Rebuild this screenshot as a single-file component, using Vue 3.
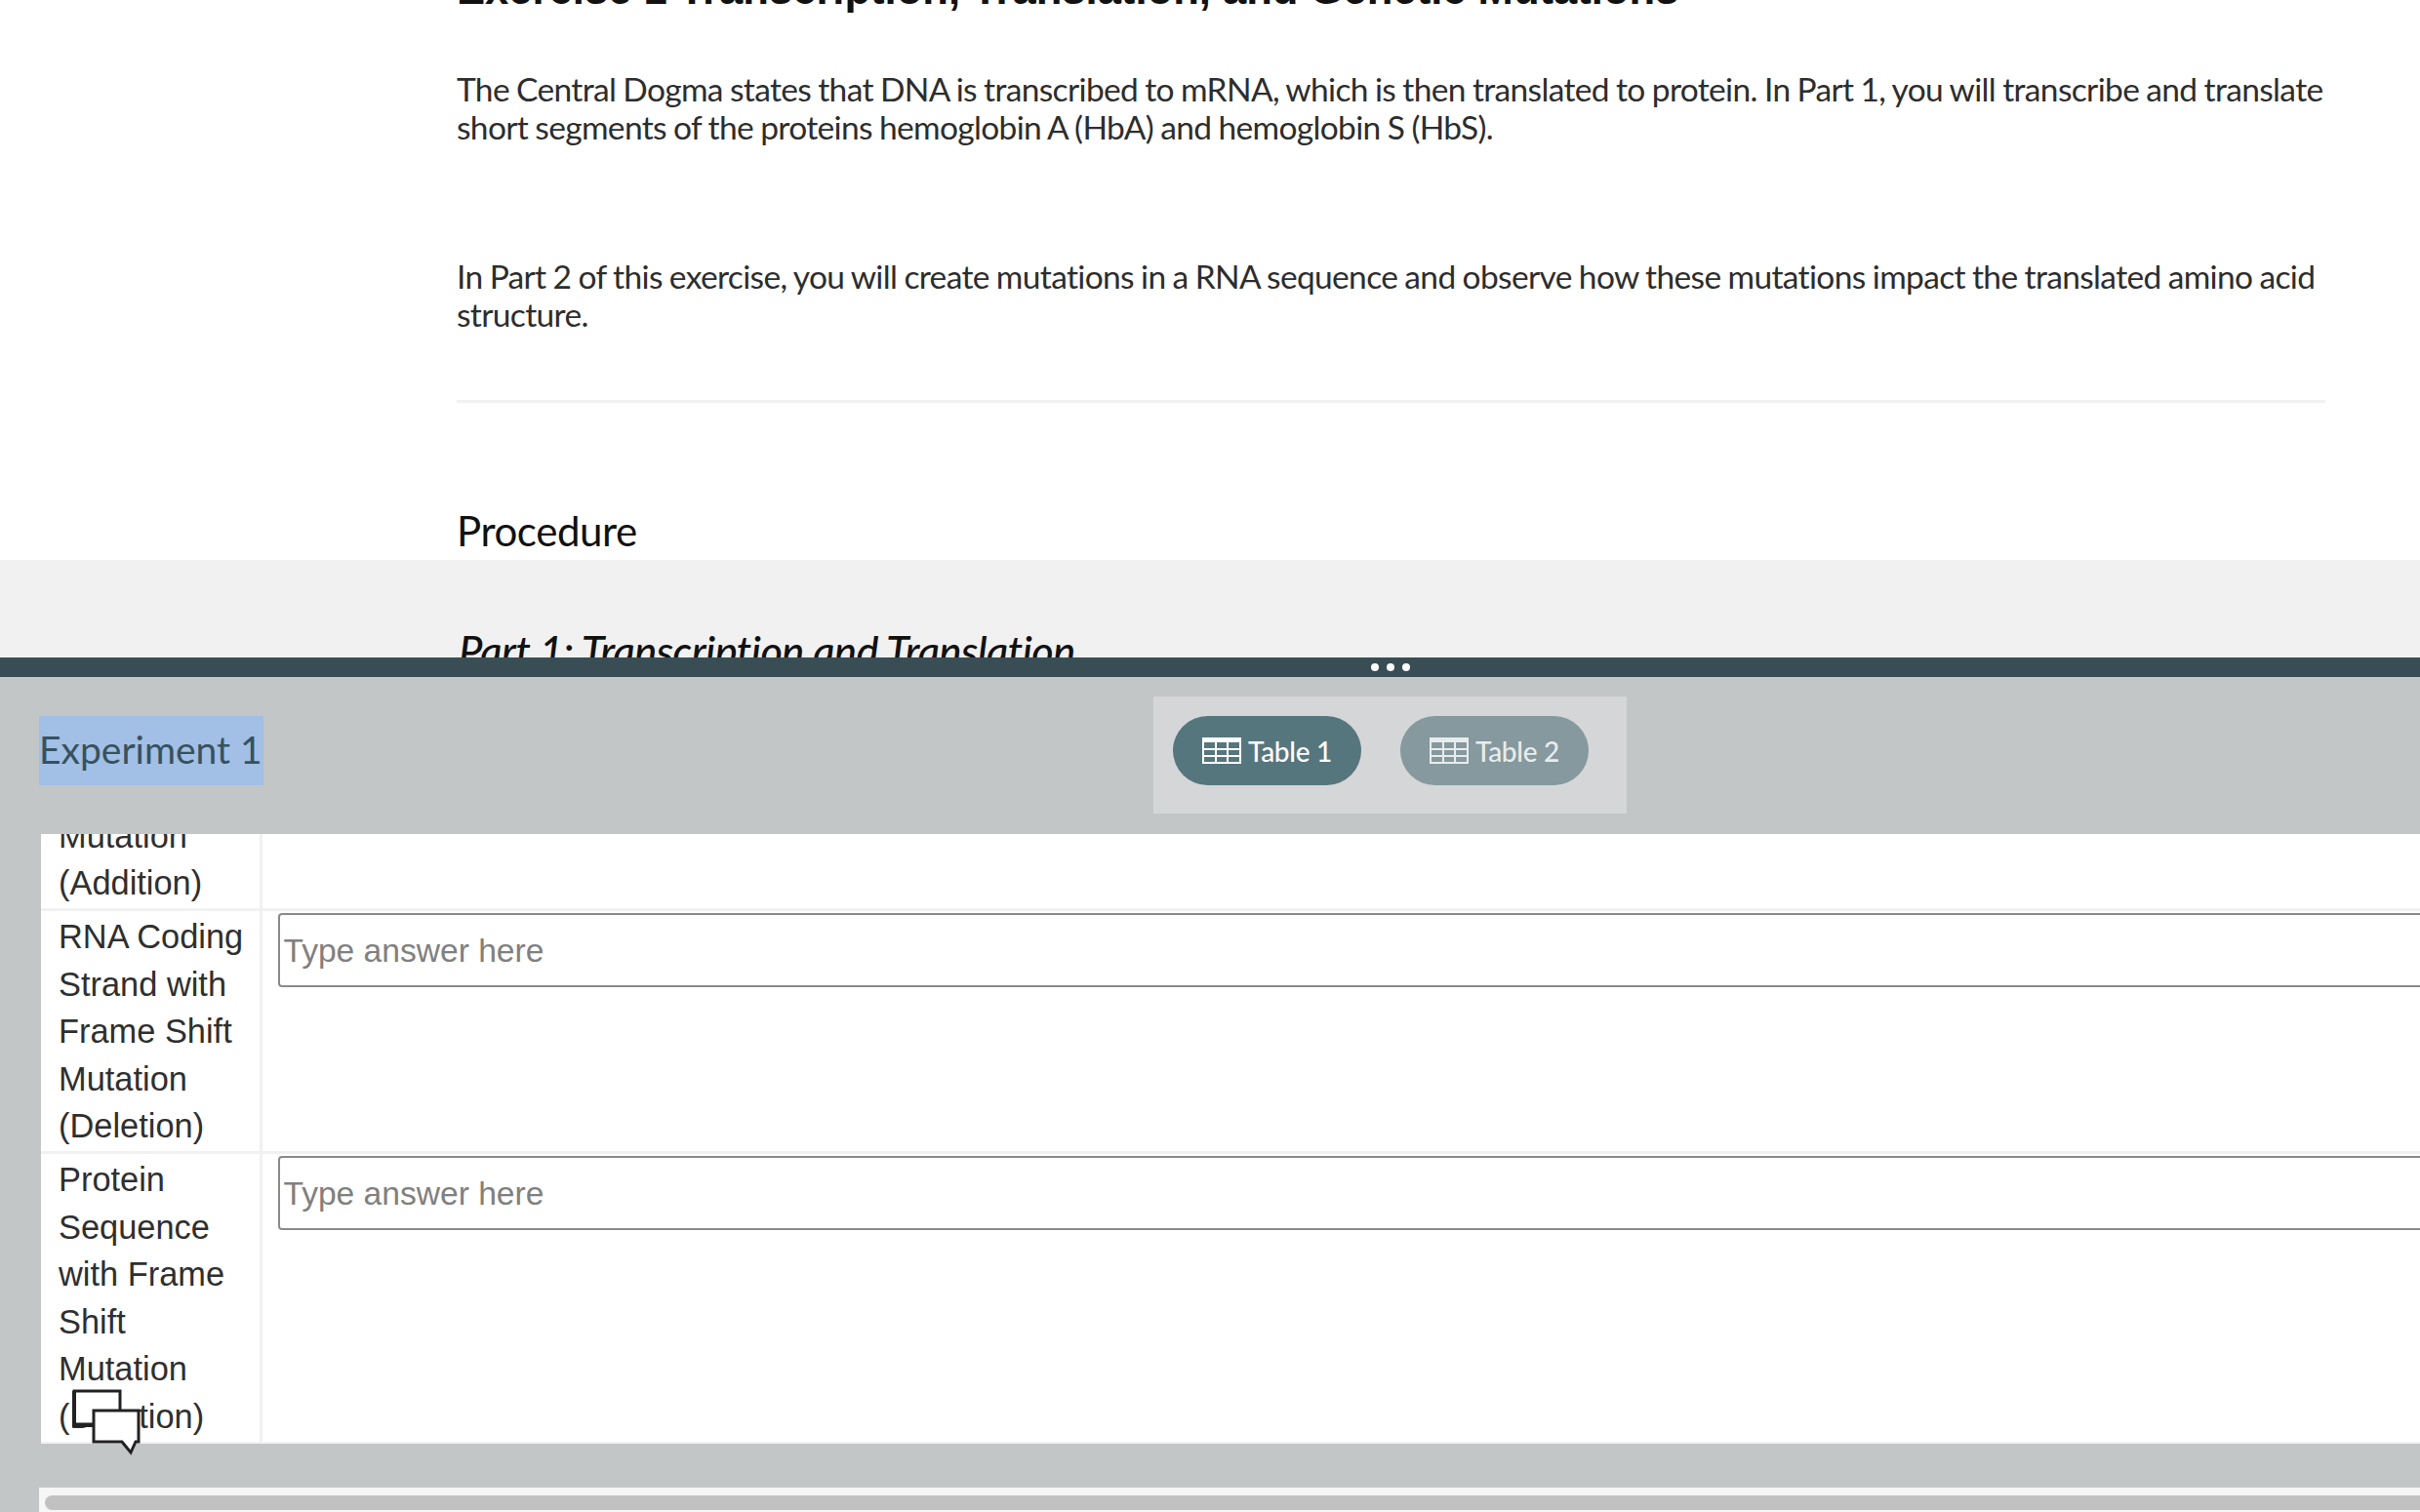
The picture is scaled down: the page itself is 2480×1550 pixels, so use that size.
<template>
  <div class="page">
    <section class="reading">
      <h2 class="exercise-title">Exercise 1 Transcription, Translation, and Genetic Mutations</h2>
      <p class="para first">The Central Dogma states that DNA is transcribed to mRNA, which is then translated to protein. In Part 1, you will transcribe and translate short segments of the proteins hemoglobin A (HbA) and hemoglobin S (HbS).</p>
      <p class="para second">In Part 2 of this exercise, you will create mutations in a RNA sequence and observe how these mutations impact the translated amino acid structure.</p>
      <hr class="rule" />
      <h3 class="procedure">Procedure</h3>
      <h4 class="part">Part 1: Transcription and Translation</h4>
    </section>

    <div class="splitter">
      <span class="dot"></span><span class="dot"></span><span class="dot"></span>
    </div>

    <section class="lab">
      <header class="lab-header">
        <div class="lab-title"><span class="selected">Experiment 1</span></div>
        <div class="tabs">
          <button
            v-for="tab in tabs"
            :key="tab.name"
            class="tab"
            :class="{ active: tab.active }"
          >
            <svg class="grid-icon" viewBox="0 0 40 27" width="40" height="27">
              <path fill="none" stroke="currentColor" stroke-width="2" d="M1 1h38v25H1z" />
              <path fill="currentColor" d="M0 0h40v5H0z" />
              <path fill="none" stroke="currentColor" stroke-width="2" d="M1 12h38M1 19h38M14 4v22M26 4v22" />
            </svg>
            <span>{{ tab.name }}</span>
          </button>
        </div>
      </header>

      <div class="table-clip">
        <table class="answers">
          <tbody>
            <tr v-for="row in rows" :key="row.label">
              <td class="label">{{ row.label }}</td>
              <td class="cell">
                <input v-if="row.input" class="answer" type="text" placeholder="Type answer here" />
              </td>
            </tr>
          </tbody>
        </table>
      </div>

      <div class="lab-gap"></div>
      <div class="scroll-track"><div class="scroll-thumb"></div></div>

      <!-- feedback icon sits over the table corner -->
      <svg class="chat-icon" viewBox="0 0 74 74" width="74" height="74">
        <path fill="#fff" stroke="#222" stroke-width="3" d="M4 6h47v34H4z" />
        <path fill="none" stroke="#222" stroke-width="4" d="M4 6v35h20" />
        <path fill="#fff" stroke="#222" stroke-width="3" d="M24 26h46v32h-3l-5 11-9-11H24z" />
      </svg>
    </section>
  </div>
</template>

<script setup>
const tabs = [
  { name: 'Table 1', active: true },
  { name: 'Table 2', active: false }
]

const rows = [
  { label: 'RNA Coding Strand with Frame Shift Mutation (Addition)', input: false },
  { label: 'RNA Coding Strand with Frame Shift Mutation (Deletion)', input: true },
  { label: 'Protein Sequence with Frame Shift Mutation (Deletion)', input: true }
]
</script>

<style>
html,
body {
  margin: 0;
  overflow: hidden;
}
</style>

<style scoped>
.page {
  width: 2480px;
  height: 1550px;
  overflow: hidden;
  display: flex;
  flex-direction: column;
  font-family: Lato, "Liberation Sans", sans-serif;
}

.reading {
  height: 674px;
  flex: none;
  overflow: hidden;
  box-sizing: border-box;
  padding: 0 97px 0 468px;
  background: linear-gradient(#fff 574px, #f1f1f1 574px);
}

.exercise-title {
  margin: -26px 0 0;
  font-family: "Liberation Sans", sans-serif;
  font-size: 43.6px;
  line-height: 30px;
  font-weight: 700;
  color: #111;
}

.para {
  margin: 0;
  font-size: 33.5px;
  line-height: 39px;
  letter-spacing: -0.65px;
  word-spacing: -0.8px;
  color: #2d2d2d;
}

.first {
  margin-top: 68px;
}

.second {
  margin-top: 114px;
}

.rule {
  margin: 68px 0 0;
  border: 0;
  height: 3px;
  background: #f1f1f1;
}

.procedure {
  margin: 107px 0 0;
  font-size: 42px;
  line-height: 48px;
  font-weight: 400;
  letter-spacing: -0.4px;
  color: #111;
}

.part {
  margin: 75px 0 0 2px;
  font-size: 43.2px;
  line-height: 46px;
  font-style: italic;
  font-weight: 500;
  letter-spacing: -0.5px;
  color: #111;
}

.splitter {
  height: 20px;
  flex: none;
  background: #394d54;
  display: flex;
  justify-content: center;
  align-items: center;
  gap: 8px;
  box-sizing: border-box;
  padding-left: 370px;
}

.dot {
  width: 8px;
  height: 8px;
  border-radius: 50%;
  background: #fff;
}

.lab {
  flex: 1;
  min-height: 0;
  position: relative;
  display: flex;
  flex-direction: column;
  background: #c2c6c7;
  overflow: hidden;
}

.lab-header {
  height: 161px;
  flex: none;
  display: flex;
  align-items: flex-start;
  padding-left: 40px;
  box-sizing: border-box;
}

.lab-title {
  margin-top: 40px;
  width: 230px;
  height: 71px;
  box-sizing: border-box;
  padding-bottom: 3px;
  display: flex;
  align-items: center;
  font-size: 39px;
  line-height: 60px;
  white-space: nowrap;
  color: #36525f;
  background: #a2bfe5;
}

.tabs {
  margin: 20px 0 0 912px;
  width: 485px;
  height: 120px;
  box-sizing: border-box;
  padding: 20px;
  display: flex;
  gap: 40px;
  background: #d5d6d7;
}

.tab {
  width: 193px;
  height: 71px;
  border: 0;
  padding: 0;
  border-radius: 36px;
  display: flex;
  align-items: center;
  justify-content: center;
  gap: 7px;
  font-family: Lato, "Liberation Sans", sans-serif;
  font-size: 28px;
  font-weight: 500;
  letter-spacing: -0.3px;
  color: #e8eced;
  background: #85999e;
}

.tab.active {
  color: #fff;
  background: #56767e;
}

.grid-icon {
  flex: none;
}

.table-clip {
  flex: none;
  height: 625px;
  box-sizing: border-box;
  margin-left: 42px;
  overflow: hidden;
  background: #fff;
  border-bottom: 2px solid #f1f1f1;
}

.answers {
  width: 2600px;
  margin-top: -170px;
  table-layout: fixed;
  border-collapse: collapse;
  font-family: "Liberation Sans", sans-serif;
  font-size: 34.4px;
  line-height: 48.6px;
  color: #2f2f2f;
}

.answers tr + tr td {
  border-top: 3px solid #f1f1f1;
}

.label {
  width: 225px;
  box-sizing: border-box;
  padding: 2px 10px 1px 18px;
  vertical-align: top;
  border-right: 3px solid #f1f1f1;
}

.cell {
  padding: 2px 0 0 16px;
  vertical-align: top;
}

.answer {
  display: block;
  width: 2300px;
  height: 76px;
  box-sizing: border-box;
  padding: 2px 4px 0;
  border: 2px solid #8a8a8a;
  border-radius: 4px;
  font-family: "Liberation Sans", sans-serif;
  font-size: 33.6px;
  background: #fff;
}

.answer::placeholder {
  color: #808080;
  opacity: 1;
}

.chat-icon {
  position: absolute;
  left: 72px;
  top: 726px;
}

.lab-gap {
  height: 45px;
  flex: none;
}

.scroll-track {
  flex: 1;
  margin-left: 40px;
  padding: 8px 0 0 6px;
  background: #f6f6f6;
}

.scroll-thumb {
  height: 15px;
  border-radius: 8px 0 0 8px;
  background: #c1c1c1;
}
</style>
